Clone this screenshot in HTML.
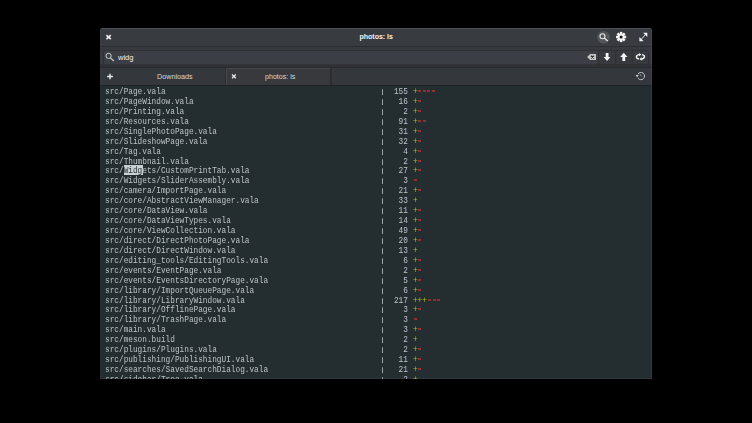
<!DOCTYPE html>
<html><head><meta charset="utf-8">
<style>
*{margin:0;padding:0;box-sizing:border-box}
html,body{width:752px;height:423px;background:#000;overflow:hidden;position:relative}
.a{position:absolute}
#win{left:100px;top:28px;width:552px;height:351px;background:#242d30;border-radius:3px 3px 0 0;overflow:hidden}
#hdr{left:0;top:0;width:552px;height:19px;background:#383b3f;border-top:1px solid #4a4e55;border-bottom:1px solid #2b2d30}
#sbar{left:0;top:19px;width:552px;height:21px;background:#363a3e;border-bottom:1px solid #292b2e}
#sshadow{left:0;top:17px;width:552px;height:3px;background:#2f3134}
#entry{left:3px;top:3px;width:496px;height:15px;background:#3b3e44;border:1px solid #2e3034;border-bottom-color:#33353a;border-radius:2px}
#tabs{left:0;top:40px;width:552px;height:18px;background:#34373b;border-bottom:1px solid #1f2326}
#atab{left:126px;top:0px;width:105px;height:17px;background:#37393d;border:1px solid #45474b;border-bottom:none;border-right-color:#2a2c2f;border-radius:2px 2px 0 0}
.sans{font-family:"Liberation Sans",sans-serif;color:#e6e6e6;white-space:nowrap}
#term{left:5px;top:0;font-family:"Liberation Mono",monospace;font-size:7.77px;color:#bdc4c7;white-space:pre;will-change:transform}
.l{position:absolute;left:0;line-height:8.6px;transform:scaleY(1.15);transform-origin:0 0}
.p{color:#adc01a;position:relative;left:0.3px;top:0.35px}.m{color:transparent;background-image:repeating-linear-gradient(90deg,transparent 0 1.1px,#ec3434 1.1px 4.1px,transparent 4.1px 4.662px);background-size:100% 0.95px;background-repeat:no-repeat;background-position:0 3.2px}
.pp{color:transparent;position:relative}.pp::after{content:"";position:absolute;left:2px;top:1.6px;width:1px;height:5.3px;background:#97a5a9}
.sel{color:#2b3033}
svg{position:absolute;overflow:visible}
</style></head><body>
<div id="win" class="a">
  <div id="hdr" class="a">
    <div class="a sans" style="left:259.5px;top:4px;font-size:7px;font-weight:bold;color:#f2f2f2">photos: ls</div>
  </div>
  <div id="sbar" class="a">
    <div id="sshadow" class="a"></div><div id="entry" class="a"></div>
    <div class="a sans" style="left:18px;top:5.5px;font-size:7.5px;color:#eef2f6">widg</div>
  </div>
  <div id="tabs" class="a">
    <div id="atab" class="a"></div>
    <div class="a sans" style="left:57px;top:3.5px;font-size:7.2px;color:#d8d8d8">Downloads</div>
    <div class="a" style="left:125px;top:0px;width:1px;height:17px;background:#2c2e31"></div>
    <div class="a sans" style="left:165px;top:4.5px;font-size:7.1px;color:#d8d8d8">photos: ls</div>
    <div class="a" style="left:231px;top:0px;width:1px;height:17px;background:#2c2e31"></div>
  </div>
  <div class="a" style="left:23.8px;top:137.2px;width:18.9px;height:10.2px;background:#c8d0d4"></div>
  <div id="term" class="a"><div class="l" style="top:59.00px">src/Page.vala                                              <span class=pp>|</span>  155 <span class=p>+</span><span class=m>----</span></div><div class="l" style="top:68.93px">src/PageWindow.vala                                        <span class=pp>|</span>   16 <span class=p>+</span><span class=m>-</span></div><div class="l" style="top:78.86px">src/Printing.vala                                          <span class=pp>|</span>    2 <span class=p>+</span><span class=m>-</span></div><div class="l" style="top:88.79px">src/Resources.vala                                         <span class=pp>|</span>   91 <span class=p>+</span><span class=m>--</span></div><div class="l" style="top:98.72px">src/SinglePhotoPage.vala                                   <span class=pp>|</span>   31 <span class=p>+</span><span class=m>-</span></div><div class="l" style="top:108.65px">src/SlideshowPage.vala                                     <span class=pp>|</span>   32 <span class=p>+</span><span class=m>-</span></div><div class="l" style="top:118.58px">src/Tag.vala                                               <span class=pp>|</span>    4 <span class=p>+</span><span class=m>-</span></div><div class="l" style="top:128.51px">src/Thumbnail.vala                                         <span class=pp>|</span>    2 <span class=p>+</span><span class=m>-</span></div><div class="l" style="top:138.44px">src/<span class=sel>Widg</span>ets/CustomPrintTab.vala                            <span class=pp>|</span>   27 <span class=p>+</span><span class=m>-</span></div><div class="l" style="top:148.37px">src/Widgets/SliderAssembly.vala                            <span class=pp>|</span>    3 <span class=m>-</span></div><div class="l" style="top:158.30px">src/camera/ImportPage.vala                                 <span class=pp>|</span>   21 <span class=p>+</span><span class=m>-</span></div><div class="l" style="top:168.23px">src/core/AbstractViewManager.vala                          <span class=pp>|</span>   33 <span class=p>+</span></div><div class="l" style="top:178.16px">src/core/DataView.vala                                     <span class=pp>|</span>   11 <span class=p>+</span><span class=m>-</span></div><div class="l" style="top:188.09px">src/core/DataViewTypes.vala                                <span class=pp>|</span>   14 <span class=p>+</span><span class=m>-</span></div><div class="l" style="top:198.02px">src/core/ViewCollection.vala                               <span class=pp>|</span>   49 <span class=p>+</span><span class=m>-</span></div><div class="l" style="top:207.95px">src/direct/DirectPhotoPage.vala                            <span class=pp>|</span>   20 <span class=p>+</span><span class=m>-</span></div><div class="l" style="top:217.88px">src/direct/DirectWindow.vala                               <span class=pp>|</span>   13 <span class=p>+</span></div><div class="l" style="top:227.81px">src/editing_tools/EditingTools.vala                        <span class=pp>|</span>    6 <span class=p>+</span><span class=m>-</span></div><div class="l" style="top:237.74px">src/events/EventPage.vala                                  <span class=pp>|</span>    2 <span class=p>+</span><span class=m>-</span></div><div class="l" style="top:247.67px">src/events/EventsDirectoryPage.vala                        <span class=pp>|</span>    5 <span class=p>+</span><span class=m>-</span></div><div class="l" style="top:257.60px">src/library/ImportQueuePage.vala                           <span class=pp>|</span>    6 <span class=p>+</span><span class=m>-</span></div><div class="l" style="top:267.53px">src/library/LibraryWindow.vala                             <span class=pp>|</span>  217 <span class=p>+++</span><span class=m>---</span></div><div class="l" style="top:277.46px">src/library/OfflinePage.vala                               <span class=pp>|</span>    3 <span class=p>+</span><span class=m>-</span></div><div class="l" style="top:287.39px">src/library/TrashPage.vala                                 <span class=pp>|</span>    3 <span class=m>-</span></div><div class="l" style="top:297.32px">src/main.vala                                              <span class=pp>|</span>    3 <span class=p>+</span><span class=m>-</span></div><div class="l" style="top:307.25px">src/meson.build                                            <span class=pp>|</span>    2 <span class=p>+</span></div><div class="l" style="top:317.18px">src/plugins/Plugins.vala                                   <span class=pp>|</span>    2 <span class=p>+</span><span class=m>-</span></div><div class="l" style="top:327.11px">src/publishing/PublishingUI.vala                           <span class=pp>|</span>   11 <span class=p>+</span><span class=m>-</span></div><div class="l" style="top:337.04px">src/searches/SavedSearchDialog.vala                        <span class=pp>|</span>   21 <span class=p>+</span><span class=m>-</span></div><div class="l" style="top:346.97px">src/sidebar/Tree.vala                                      <span class=pp>|</span>    2 <span class=p>+</span></div></div>
</div>

<div class="a" style="left:100px;top:28px;width:552px;height:351px;border-left:1px solid rgba(255,255,255,0.025);border-right:1px solid rgba(255,255,255,0.07);border-bottom:1px solid rgba(255,255,255,0.05);border-radius:3px 3px 0 0"></div>
<svg id="ov" width="752" height="423" viewBox="0 0 752 423" style="left:0;top:0">
 <!-- header close -->
 <path d="M106.4 35.1L110.8 39.1M110.8 35.1L106.4 39.1" stroke="#f0f0f0" stroke-width="1.5"/>
 <!-- search button -->
 <circle cx="603.6" cy="37.2" r="6.3" fill="#53555a"/>
 <circle cx="602.5" cy="36.3" r="2.5" fill="none" stroke="#e6e6e6" stroke-width="1.1"/>
 <path d="M604.4 38.2L607.8 41" stroke="#e6e6e6" stroke-width="1.3"/>
 <!-- gear -->
 <g transform="translate(621.1 37)" fill="#f4f4f4">
  <circle r="3.5"/>
  <g id="tooth"><rect x="-1.2" y="-5.1" width="2.4" height="2.5"/></g>
  <use href="#tooth" transform="rotate(45)"/><use href="#tooth" transform="rotate(90)"/><use href="#tooth" transform="rotate(135)"/>
  <use href="#tooth" transform="rotate(180)"/><use href="#tooth" transform="rotate(225)"/><use href="#tooth" transform="rotate(270)"/><use href="#tooth" transform="rotate(315)"/>
  <circle r="1.5" fill="#151515"/>
 </g>
 <!-- expand -->
 <g fill="#f2f2f2"><path d="M643.1 32.7H647.3V36.9Z"/><path d="M639.4 37.1V41.3H643.6Z"/></g>
 <path d="M641 39.7L645.7 34.3" stroke="#f2f2f2" stroke-width="0.9"/>
 <!-- entry magnifier -->
 <circle cx="108.6" cy="55.9" r="2.6" fill="none" stroke="#cfcfcf" stroke-width="1"/>
 <path d="M110.5 57.8L113.8 61" stroke="#cfcfcf" stroke-width="1.1"/>
 <!-- button group -->
 <g fill="none" stroke="#2e3034" stroke-width="1">
  <rect x="598.5" y="50.5" width="50" height="14" rx="1.5"/>
  <path d="M615.6 50.5V64.5M632.2 50.5V64.5"/>
 </g>
 <!-- backspace -->
 <path d="M587.1 57.05L590.1 54H596V60.1H590.1Z" fill="#c6c6c6"/>
 <path d="M591 55.8L593.8 58.4M593.8 55.8L591 58.4" stroke="#26282b" stroke-width="1.25"/>
 <!-- down / up arrows -->
 <path d="M605.7 53H608.5V57H610.4L607.05 61L603.7 57H605.7Z" fill="#f4f4f4"/>
 <path d="M622.4 61H625.2V57H627.4L623.8 52.8L620.2 57H622.4Z" fill="#f4f4f4"/>
 <!-- cycle -->
 <g transform="translate(635 52)">
  <path d="M4.5 2.6A3.1 2.2 0 0 0 3.9 6.95M6.3 6.95A3.2 2.2 0 0 0 6.9 2.6" fill="none" stroke="#fafafa" stroke-width="1.4"/>
  <path d="M4.1 0.9L6.3 2.6L4.1 4.3Z M6.7 5.25L4.5 6.95L6.7 8.65Z" fill="#fafafa"/>
 </g>
 <!-- tab plus -->
 <path d="M110 73.7V79.3M107.1 76.5H112.9" stroke="#eaeaea" stroke-width="1.4"/>
 <!-- tab close -->
 <path d="M232 74.5L235.8 78.3M235.8 74.5L232 78.3" stroke="#e8e8e8" stroke-width="1.3"/>
 <!-- history -->
 <path d="M637.9 74.1A3.6 3.6 0 1 1 638.1 78.3" fill="none" stroke="#cacaca" stroke-width="1"/>
 <path d="M635.6 74.9H638.8L637.2 77.6Z" fill="#cacaca"/>
 <path d="M640.1 74.3L641.4 76.3" stroke="#a8a8a8" stroke-width="0.9"/>
</svg>
</body></html>
